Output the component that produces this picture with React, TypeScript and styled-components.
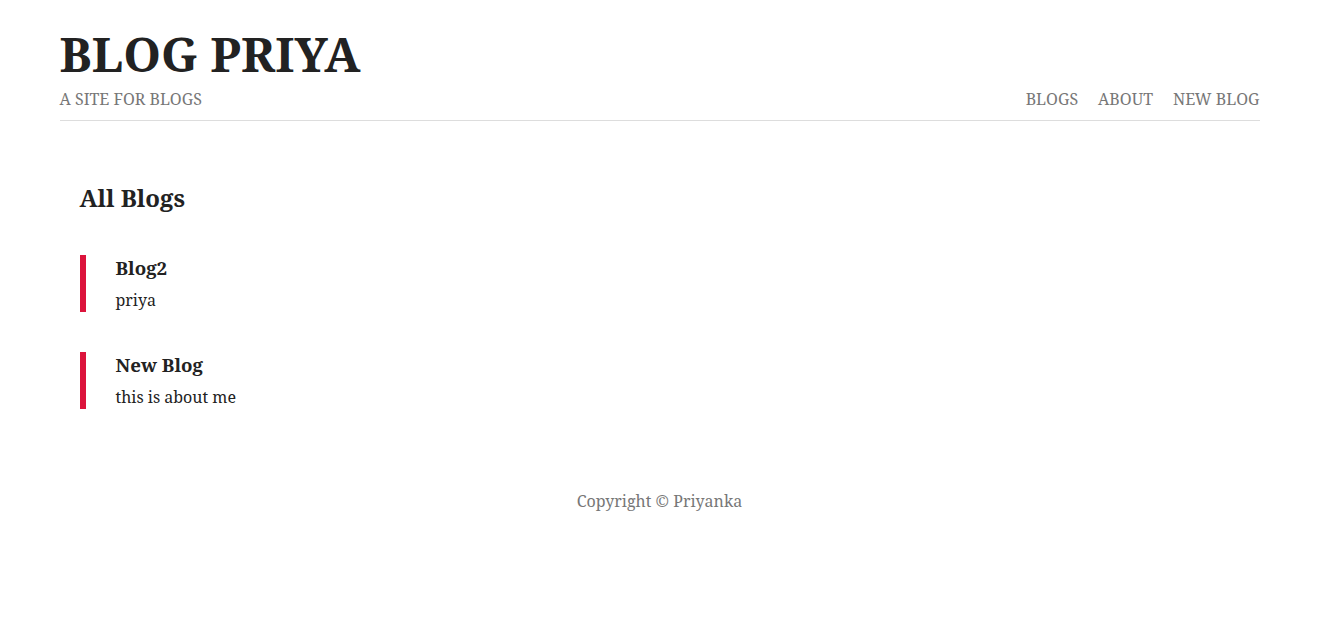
import styled, { createGlobalStyle } from "styled-components";

const GlobalStyle = createGlobalStyle`
  body {
    margin: 0;
    background: #fff;
    color: #222;
    font-family: "Noto Serif", "DejaVu Serif", "Liberation Serif", serif;
  }
`;

const blogs = [
  { title: "Blog2", body: "priya" },
  { title: "New Blog", body: "this is about me" },
];

const App = () => (
  <>
    <GlobalStyle />
    <PageStyle>
      <HeaderStyle>
        <SiteTitle>BLOG PRIYA</SiteTitle>
        <HeaderBarStyle>
          <Tagline>A SITE FOR BLOGS</Tagline>
          <NavStyle>
            <NavLink href="#">BLOGS</NavLink>
            <NavLink href="#">ABOUT</NavLink>
            <NavLink href="#">NEW BLOG</NavLink>
          </NavStyle>
        </HeaderBarStyle>
      </HeaderStyle>
      <MainStyle>
        <Heading>All Blogs</Heading>
        <BlogListStyle>
          {blogs.map((blog) => (
            <BlogItemStyle key={blog.title}>
              <BlogTitle>{blog.title}</BlogTitle>
              <BlogBody>{blog.body}</BlogBody>
            </BlogItemStyle>
          ))}
        </BlogListStyle>
      </MainStyle>
      <FooterStyle>Copyright © Priyanka</FooterStyle>
    </PageStyle>
  </>
);

const PageStyle = styled.div`
  width: 1200px;
  margin: 0 auto;
`;

const HeaderStyle = styled.header`
  padding-top: 26px;
  border-bottom: 1px solid #ddd;
`;

const SiteTitle = styled.h1`
  margin: 0;
  font-size: 48px;
  line-height: 56px;
  font-weight: 700;
  color: #222;
`;

const HeaderBarStyle = styled.div`
  display: flex;
  justify-content: space-between;
  align-items: baseline;
  padding: 6px 0 10px;
`;

const Tagline = styled.span`
  font-size: 16px;
  color: #777;
`;

const NavStyle = styled.nav`
  display: flex;
  gap: 20px;
`;

const NavLink = styled.a`
  font-size: 16px;
  color: #777;
  text-decoration: none;
`;

const MainStyle = styled.main`
  padding: 60px 20px 0;
`;

const Heading = styled.h2`
  margin: 0 0 40px;
  font-size: 24px;
  line-height: 34px;
  font-weight: 700;
`;

const BlogListStyle = styled.div`
  display: flex;
  flex-direction: column;
  gap: 40px;
`;

const BlogItemStyle = styled.article`
  border-left: 6px solid #dc143c;
  padding-left: 30px;
`;

const BlogTitle = styled.h3`
  margin: 0;
  font-size: 18.72px;
  line-height: 26px;
  font-weight: 700;
`;

const BlogBody = styled.p`
  margin: 7px 0 0;
  font-size: 16px;
  line-height: 24px;
`;

const FooterStyle = styled.footer`
  margin-top: 81px;
  text-align: center;
  font-size: 16px;
  color: #777;
`;

export default App;
